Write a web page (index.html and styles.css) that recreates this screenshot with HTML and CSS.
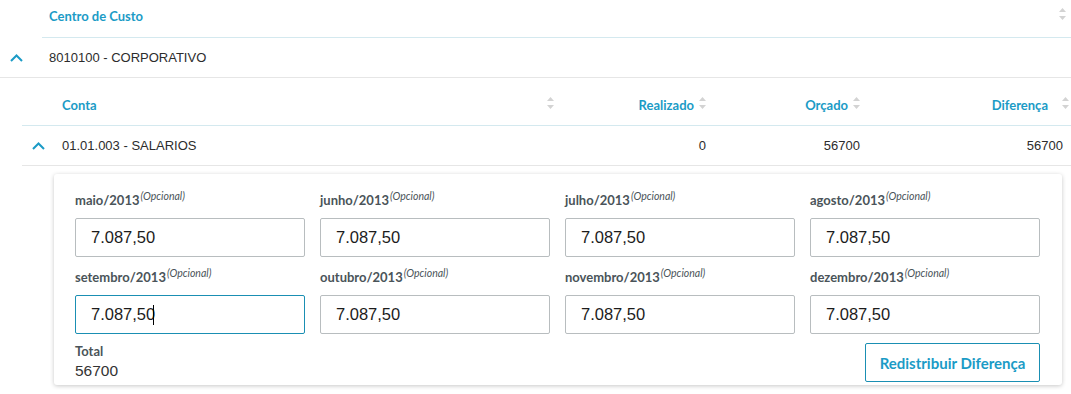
FILE: index.html
```html
<!DOCTYPE html>
<html lang="pt-BR">
<head>
    <meta charset="UTF-8">
    <title>Centro de Custo</title>
    <link rel="stylesheet" href="styles.css">
</head>
<body>
    <div class="grid">
        <div class="row head outer">
            <div class="cell"></div>
            <div class="cell th">Centro de Custo<span class="spacer"></span>
                <svg class="sort" width="7" height="12" viewBox="0 0 7 12"><path d="M3.5 0L7 4H0z M3.5 12L0 8h7z"/></svg>
            </div>
        </div>
        <div class="row outer outer-row">
            <div class="cell toggle">
                <svg width="13" height="8" viewBox="0 0 13 8"><path d="M1 7l5.5-5.5L12 7"/></svg>
            </div>
            <div class="cell">8010100 - CORPORATIVO</div>
        </div>

        <div class="detail">
            <div class="row head inner">
                <div class="cell"></div>
                <div class="cell th">Conta<span class="spacer"></span>
                    <svg class="sort" width="7" height="12" viewBox="0 0 7 12"><path d="M3.5 0L7 4H0z M3.5 12L0 8h7z"/></svg>
                </div>
                <div class="cell th num">Realizado
                    <svg class="sort" width="7" height="12" viewBox="0 0 7 12"><path d="M3.5 0L7 4H0z M3.5 12L0 8h7z"/></svg>
                </div>
                <div class="cell th num">Orçado
                    <svg class="sort" width="7" height="12" viewBox="0 0 7 12"><path d="M3.5 0L7 4H0z M3.5 12L0 8h7z"/></svg>
                </div>
                <div class="cell th num">Diferença
                    <svg class="sort wide" width="7" height="12" viewBox="0 0 7 12"><path d="M3.5 0L7 4H0z M3.5 12L0 8h7z"/></svg>
                </div>
            </div>
            <div class="row inner inner-row">
                <div class="cell toggle">
                    <svg width="13" height="8" viewBox="0 0 13 8"><path d="M1 7l5.5-5.5L12 7"/></svg>
                </div>
                <div class="cell">01.01.003 - SALARIOS</div>
                <div class="cell num">0</div>
                <div class="cell num">56700</div>
                <div class="cell num last">56700</div>
            </div>

            <div class="card">
                <div class="months">
                    <div class="field">
                        <label>maio/2013<small>(Opcional)</small></label>
                        <input type="text" value="7.087,50">
                    </div>
                    <div class="field">
                        <label>junho/2013<small>(Opcional)</small></label>
                        <input type="text" value="7.087,50">
                    </div>
                    <div class="field">
                        <label>julho/2013<small>(Opcional)</small></label>
                        <input type="text" value="7.087,50">
                    </div>
                    <div class="field">
                        <label>agosto/2013<small>(Opcional)</small></label>
                        <input type="text" value="7.087,50">
                    </div>
                    <div class="field">
                        <label>setembro/2013<small>(Opcional)</small></label>
                        <div class="input-wrap">
                            <input type="text" class="focused" value="7.087,50">
                            <span class="caret"></span>
                        </div>
                    </div>
                    <div class="field">
                        <label>outubro/2013<small>(Opcional)</small></label>
                        <input type="text" value="7.087,50">
                    </div>
                    <div class="field">
                        <label>novembro/2013<small>(Opcional)</small></label>
                        <input type="text" value="7.087,50">
                    </div>
                    <div class="field">
                        <label>dezembro/2013<small>(Opcional)</small></label>
                        <input type="text" value="7.087,50">
                    </div>
                </div>
                <div class="card-foot">
                    <div class="total">
                        <div class="total-label">Total</div>
                        <div class="total-value">56700</div>
                    </div>
                    <button type="button">Redistribuir Diferença</button>
                </div>
            </div>
        </div>
    </div>
</body>
</html>
```

FILE: styles.css
```css
body {
    margin: 0;
    padding: 0;
    font-family: "Liberation Sans", Arial, sans-serif;
    font-size: 13px;
    color: #2c2c2c;
    background: #fff;
}
.row {
    display: grid;
    align-items: center;
}
.cell {
    display: flex;
    align-items: center;
}
.outer {
    grid-template-columns: 42px 1fr;
}
.outer > .cell + .cell {
    padding-left: 7px;
}
.head {
    align-items: stretch;
}
.head .th {
    align-items: flex-end;
    padding-bottom: 11px;
    line-height: 18px;
    box-sizing: border-box;
}
.head .sort {
    margin-bottom: 5px;
}
.outer.head {
    height: 38px;
}
.outer.head .th {
    border-bottom: 1px solid #d4e9ef;
    padding-right: 5px;
    padding-bottom: 12px;
}
.outer-row {
    height: 40px;
    border-bottom: 1px solid #e6e6e6;
    box-sizing: border-box;
}
.th {
    font-family: Lato, "Noto Sans", sans-serif;
    font-weight: 700;
    color: #1b9bc6;
}
.spacer {
    flex: 1;
}
.sort {
    fill: #d3d3d3;
    margin-left: 5px;
    flex: none;
}
.sort.wide {
    margin-left: 14px;
}
.toggle {
    padding-left: 10px;
}
.toggle svg {
    fill: none;
    stroke: #1b9bc6;
    stroke-width: 2;
}
.detail {
    padding-left: 22px;
}
.inner {
    grid-template-columns: 40px 1fr 152px 154px 206px;
}
.inner .cell {
    padding-right: 5px;
}
.inner .cell.toggle {
    padding-right: 0;
}
.inner.head {
    height: 48px;
    border-bottom: 1px solid #d4e9ef;
    box-sizing: border-box;
}
.inner.head .th:last-child {
    padding-right: 2px;
}
.num {
    justify-content: flex-end;
}
.inner-row {
    height: 40px;
    border-bottom: 1px solid #e6e6e6;
    box-sizing: border-box;
}
.inner-row .num.last {
    padding-right: 8px;
}
.card {
    margin: 8px 9px 10px 32px;
    padding: 12px 22px 3px 21px;
    border-radius: 3px;
    box-shadow: 0 1px 4px rgba(0, 0, 0, 0.22);
}
.months {
    display: grid;
    grid-template-columns: repeat(4, 230px);
    column-gap: 15px;
    row-gap: 6px;
}
.field label {
    display: block;
    height: 20px;
    line-height: 20px;
    margin-bottom: 12px;
    font-family: Lato, "Noto Sans", sans-serif;
    font-weight: 700;
    font-size: 13px;
    color: #4a5459;
}
.field label small {
    font-weight: 400;
    font-style: italic;
    font-size: 10.5px;
    vertical-align: 5px;
    margin-left: 1px;
}
.field input {
    display: block;
    width: 100%;
    height: 39px;
    box-sizing: border-box;
    border: 1px solid #b8bdbf;
    border-radius: 2px;
    padding: 0 15px;
    font-family: "Liberation Sans", Arial, sans-serif;
    font-size: 16.5px;
    color: #1c1c1c;
    outline: none;
}
.field input.focused {
    border-color: #1a8fb3;
}
.input-wrap {
    position: relative;
}
.caret {
    position: absolute;
    left: 78px;
    top: 10px;
    width: 1px;
    height: 20px;
    background: #000;
}
.card-foot {
    display: flex;
    justify-content: space-between;
    align-items: flex-end;
    margin-top: 8px;
}
.total-label {
    font-family: Lato, "Noto Sans", sans-serif;
    font-weight: 700;
    font-size: 13px;
    color: #4a5459;
    line-height: 18px;
}
.total-value {
    font-size: 15.5px;
    line-height: 22px;
    color: #333;
}
button {
    width: 175px;
    height: 39px;
    background: #fff;
    border: 1px solid #1a8fb3;
    border-radius: 2px;
    font-family: Lato, "Noto Sans", sans-serif;
    font-weight: 700;
    font-size: 15px;
    color: #1b9bc6;
    cursor: pointer;
}
```
